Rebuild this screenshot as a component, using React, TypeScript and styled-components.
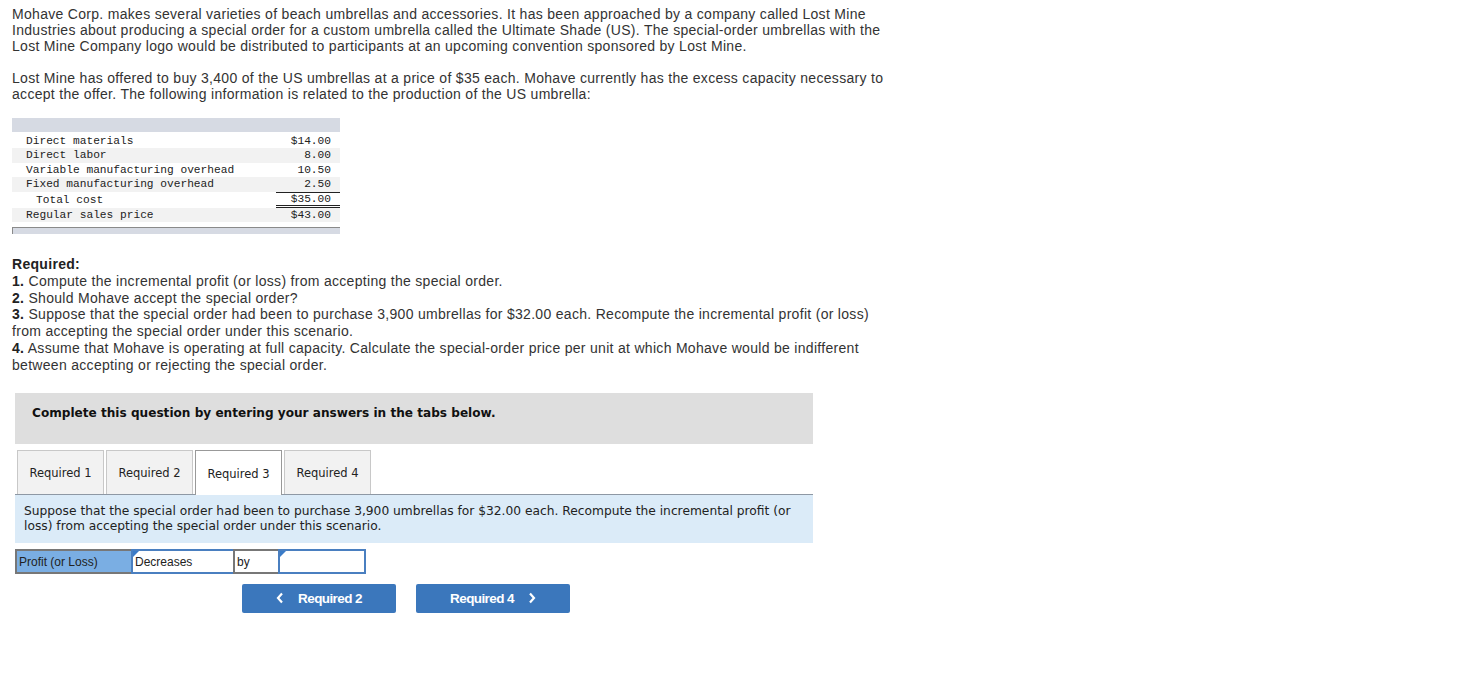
import React from "react";
import styled, { createGlobalStyle } from "styled-components";

const Global = createGlobalStyle`
  html, body { margin: 0; padding: 0; background: #fff; }
  body { font-family: "Liberation Sans", Arial, sans-serif; color: #2d2d2d; }
`;

const Page = styled.div`
  padding: 6px 12px 40px 12px;
  width: 920px;
`;

const Para = styled.p`
  margin: 0 0 16px 0;
  font-size: 14px;
  letter-spacing: 0.3px;
  line-height: 16px;
  color: #333;
`;

const Table = styled.div`
  margin-top: 2px;
  width: 328px;
  display: flex;
  flex-direction: column;
  font-family: "Liberation Mono", "DejaVu Sans Mono", monospace;
  font-size: 11.2px;
  color: #222;
`;

const TableHead = styled.div`
  height: 14px;
  background: #d6dae3;
  margin-bottom: 1.5px;
`;

const Row = styled.div<{ $shade?: boolean; $tall?: boolean }>`
  display: grid;
  grid-template-columns: 1fr 64px;
  height: ${(p) => (p.$tall ? "16px" : "14.5px")};
  align-items: center;
  background: ${(p) => (p.$shade ? "#f2f2f2" : "#fff")};
`;

const Label = styled.span<{ $indent?: boolean }>`
  padding-left: ${(p) => (p.$indent ? "24px" : "14px")};
`;

const Value = styled.span<{ $top?: boolean; $double?: boolean }>`
  padding-right: 9px;
  height: 100%;
  display: flex;
  align-items: center;
  justify-content: flex-end;
  box-sizing: border-box;
  border-top: ${(p) => (p.$top ? "1px solid #222" : "none")};
  border-bottom: ${(p) => (p.$double ? "3px double #222" : "none")};
`;

const TableFoot = styled.div`
  margin-top: 5px;
  height: 6px;
  background: #d6dae3;
  border-top: 1px solid #8a8a8a;
  border-left: 1px solid #8a8a8a;
`;

const Required = styled.div`
  margin-top: 22px;
  font-size: 14px;
  letter-spacing: 0.3px;
  line-height: 16.8px;
  color: #333;
`;

const B = styled.b`
  font-weight: bold;
  color: #222;
`;

const Notice = styled.div`
  margin: 19px 0 0 3px;
  width: 798px;
  height: 51px;
  box-sizing: border-box;
  background: #dedede;
  padding: 13px 17px 11px;
  font-family: "DejaVu Sans", Verdana, sans-serif;
  font-weight: bold;
  font-size: 12.1px;
  color: #111;
`;

const Tabs = styled.div`
  margin: 6px 0 0 3px;
  width: 798px;
  display: flex;
  gap: 2px;
  padding-left: 2px;
  box-sizing: border-box;
  border-bottom: 1px solid #8e98a4;
`;

const Tab = styled.div<{ $active?: boolean }>`
  width: 87px;
  box-sizing: border-box;
  display: flex;
  align-items: center;
  justify-content: center;
  padding-top: 2px;
  font-family: "DejaVu Sans", Verdana, sans-serif;
  font-size: 11.5px;
  color: #222;
  background: ${(p) => (p.$active ? "#fff" : "#f2f2f2")};
  border: 1px solid ${(p) => (p.$active ? "#999" : "#c8c8c8")};
  border-bottom: none;
  margin-bottom: ${(p) => (p.$active ? "-1px" : "0")};
  height: ${(p) => (p.$active ? "45px" : "44px")};
`;

const Prompt = styled.div`
  margin-left: 3px;
  width: 798px;
  box-sizing: border-box;
  background: #dbebf8;
  padding: 9px 9px 9px 9px;
  font-family: "DejaVu Sans", Verdana, sans-serif;
  font-size: 12.25px;
  line-height: 15px;
  color: #222;
`;

const AnswerRow = styled.div`
  margin: 6px 0 0 3px;
  display: flex;
  height: 25px;
  font-family: "Liberation Sans", Arial, sans-serif;
  font-size: 12px;
  color: #222;
`;

const Cell = styled.div<{ $w: number; $bg?: string; $border: string }>`
  position: relative;
  width: ${(p) => p.$w}px;
  box-sizing: border-box;
  border: 2px solid ${(p) => p.$border};
  margin-left: -2px;
  &:first-child { margin-left: 0; }
  background: ${(p) => p.$bg || "#fff"};
  display: flex;
  align-items: center;
  padding: 1px 0 0 2px;
`;

const Marker = styled.span`
  position: absolute;
  left: 0;
  top: 0;
  width: 0;
  height: 0;
  border-top: 6px solid #3a7bc8;
  border-right: 6px solid transparent;
`;

const Nav = styled.div`
  margin: 10px 0 0 230px;
  display: flex;
  gap: 20px;
`;

const NavButton = styled.button`
  width: 154px;
  height: 29px;
  border: none;
  border-radius: 2px;
  background: #3b77bc;
  color: #fff;
  font-family: "Liberation Sans", Arial, sans-serif;
  font-weight: bold;
  font-size: 13.5px;
  letter-spacing: -0.6px;
  display: flex;
  align-items: center;
  justify-content: center;
  gap: 14px;
  padding: 0;
`;

const Chevron = ({ dir }: { dir: "left" | "right" }) => (
  <svg width="8" height="12" viewBox="0 0 8 12">
    <path
      d={dir === "left" ? "M6 1.5 L2 6 L6 10.5" : "M2 1.5 L6 6 L2 10.5"}
      stroke="#fff"
      strokeWidth="2.2"
      fill="none"
    />
  </svg>
);

export default function App() {
  return (
    <>
      <Global />
      <Page>
        <Para>
          Mohave Corp. makes several varieties of beach umbrellas and accessories. It has been approached by a company called Lost Mine
          <br />
          Industries about producing a special order for a custom umbrella called the Ultimate Shade (US). The special-order umbrellas with the
          <br />
          Lost Mine Company logo would be distributed to participants at an upcoming convention sponsored by Lost Mine.
        </Para>
        <Para>
          Lost Mine has offered to buy 3,400 of the US umbrellas at a price of $35 each. Mohave currently has the excess capacity necessary to
          <br />
          accept the offer. The following information is related to the production of the US umbrella:
        </Para>
        <Table>
          <TableHead />
          <Row>
            <Label>Direct materials</Label>
            <Value>$14.00</Value>
          </Row>
          <Row $shade>
            <Label>Direct labor</Label>
            <Value>8.00</Value>
          </Row>
          <Row>
            <Label>Variable manufacturing overhead</Label>
            <Value>10.50</Value>
          </Row>
          <Row $shade>
            <Label>Fixed manufacturing overhead</Label>
            <Value>2.50</Value>
          </Row>
          <Row $tall>
            <Label $indent>Total cost</Label>
            <Value $top $double>$35.00</Value>
          </Row>
          <Row $shade>
            <Label>Regular sales price</Label>
            <Value>$43.00</Value>
          </Row>
          <TableFoot />
        </Table>
        <Required>
          <B>Required:</B>
          <br />
          <B>1.</B> Compute the incremental profit (or loss) from accepting the special order.
          <br />
          <B>2.</B> Should Mohave accept the special order?
          <br />
          <B>3.</B> Suppose that the special order had been to purchase 3,900 umbrellas for $32.00 each. Recompute the incremental profit (or loss)
          <br />
          from accepting the special order under this scenario.
          <br />
          <B>4.</B> Assume that Mohave is operating at full capacity. Calculate the special-order price per unit at which Mohave would be indifferent
          <br />
          between accepting or rejecting the special order.
        </Required>
        <Notice>Complete this question by entering your answers in the tabs below.</Notice>
        <Tabs>
          <Tab>Required 1</Tab>
          <Tab>Required 2</Tab>
          <Tab $active>Required 3</Tab>
          <Tab>Required 4</Tab>
        </Tabs>
        <Prompt>
          Suppose that the special order had been to purchase 3,900 umbrellas for $32.00 each. Recompute the incremental profit (or loss) from accepting the special order under this scenario.
        </Prompt>
        <AnswerRow>
          <Cell $w={118} $bg="#7aaee3" $border="#777">Profit (or Loss)</Cell>
          <Cell $w={104} $border="#4a7fc0">
            <Marker />
            Decreases
          </Cell>
          <Cell $w={47} $border="#777">by</Cell>
          <Cell $w={88} $border="#4a7fc0">
            <Marker />
          </Cell>
        </AnswerRow>
        <Nav>
          <NavButton>
            <Chevron dir="left" />
            Required 2
          </NavButton>
          <NavButton>
            Required 4
            <Chevron dir="right" />
          </NavButton>
        </Nav>
      </Page>
    </>
  );
}
